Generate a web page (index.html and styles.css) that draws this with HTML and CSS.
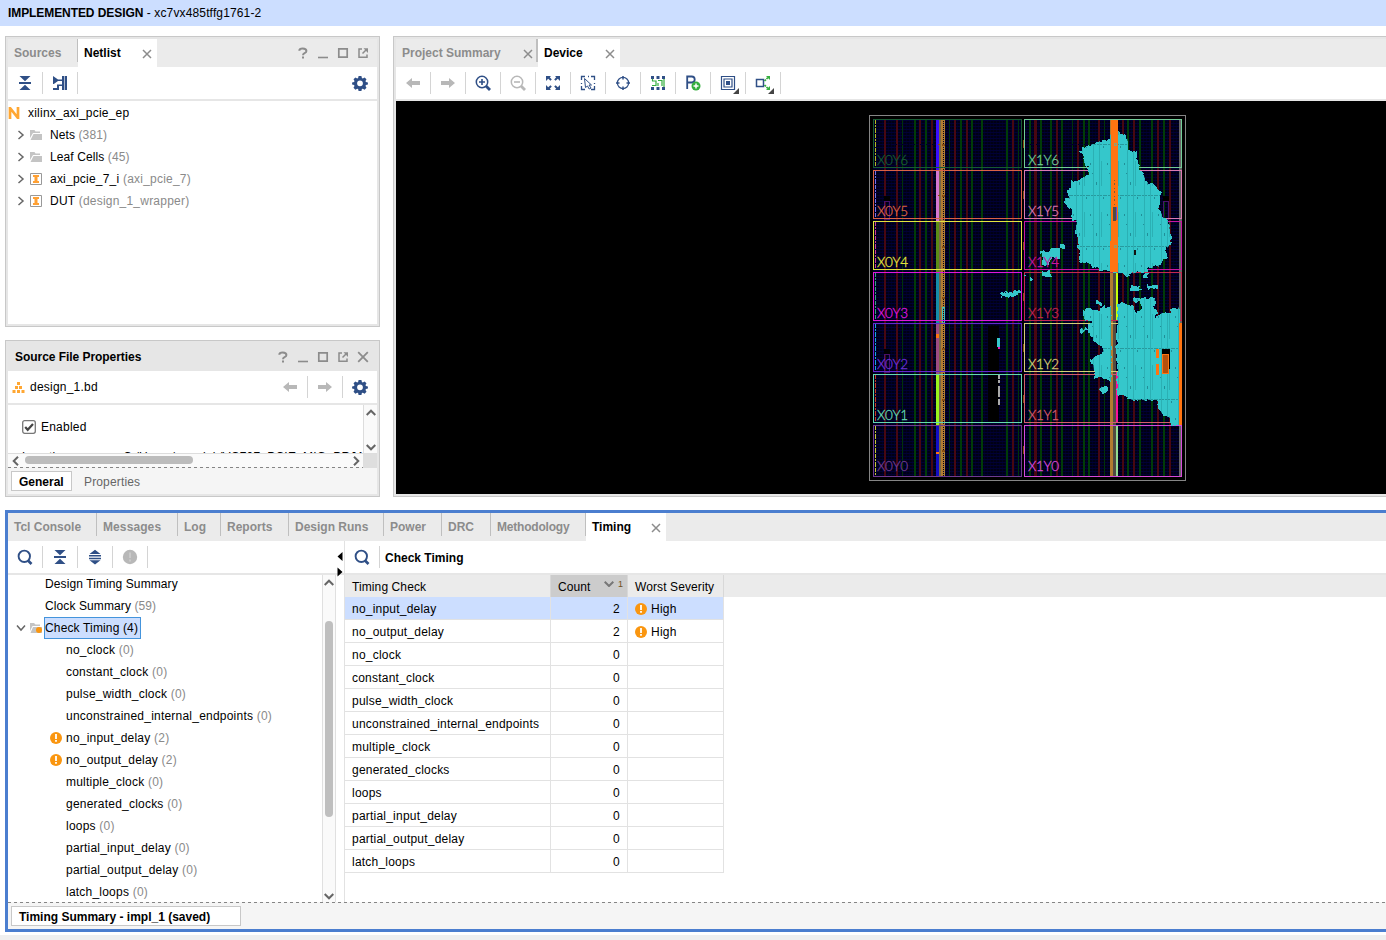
FILE: index.html
```html
<!DOCTYPE html>
<html lang="en">
<head>
<meta charset="utf-8">
<title>Implemented Design</title>
<link rel="stylesheet" href="styles.css">
</head>
<body>
<svg class="defs" width="0" height="0" aria-hidden="true">
  <defs>
    <symbol id="close" viewBox="0 0 10 10"><path d="M1 1l8 8M9 1L1 9" stroke="#8c8c8c" stroke-width="1.5" fill="none"/></symbol>
    <symbol id="help" viewBox="0 0 12 12"><path d="M2.3 3.8Q2.4 1.5 5.7 1.5Q9.4 1.5 9.4 4Q9.4 5.4 7.6 6.2Q6 6.9 6 8.3M6 9.6V11.6" stroke="#8c8c8c" stroke-width="2" fill="none"/></symbol>
    <symbol id="min" viewBox="0 0 12 12"><path d="M1 10.5h10" stroke="#8c8c8c" stroke-width="1.6"/></symbol>
    <symbol id="max" viewBox="0 0 12 12"><path d="M1.8 1.800h8.400v8.400H1.800z" stroke="#8c8c8c" stroke-width="1.700" fill="none"/></symbol>
    <symbol id="pop" viewBox="0 0 12 12"><path d="M5 2H2v8.300h8V7.500M5.500 6.500L9 3" stroke="#8c8c8c" stroke-width="1.500" fill="none"/><path d="M6.500 1.300H11V6z" fill="#8c8c8c"/></symbol>
    <symbol id="gear" viewBox="0 0 16 16"><path fill="#2f4f86" fill-rule="evenodd" d="M6.600 1h2.800l.5 2 .9.4 1.800-1 1.900 1.900-1 1.800.4.9 2 .5v2.100l-2 .5-.4.9 1 1.800-1.900 1.900-1.800-1-.9.4-.5 2H6.600l-.5-2-.9-.4-1.800 1-1.900-1.900 1-1.800-.4-.9-2-.5V7.500l2-.5.4-.9-1-1.800 1.900-1.900 1.800 1 .9-.4zM8 5.400a2.900 2.900 0 1 0 0 5.800 2.900 2.900 0 0 0 0-5.800z"/></symbol>
    <symbol id="collapse" viewBox="0 0 16 16"><path fill="#2f4f86" d="M2.500 1h11L8 6.200zM2 7h12v2H2zM2.500 15h11L8 9.800z"/></symbol>
    <symbol id="expand" viewBox="0 0 16 16"><path fill="#2f4f86" d="M8 .8L13.500 5h-11zM2 6h12v1.500H2zM2 8.800h12v1.500H2zM2.500 11.200h11L8 15.400z"/></symbol>
    <symbol id="search" viewBox="0 0 16 16"><circle cx="7.300" cy="7.300" r="5.700" fill="none" stroke="#2f4f86" stroke-width="1.900"/><path d="M11 11.500l3.500 3.500" stroke="#2f4f86" stroke-width="2.600"/></symbol>
    <symbol id="left" viewBox="0 0 16 16"><path fill="#b8b8b8" d="M1 8l6-5v3h8v4H7v3z"/></symbol>
    <symbol id="right" viewBox="0 0 16 16"><path fill="#b8b8b8" d="M15 8L9 3v3H1v4h8v3z"/></symbol>
    <symbol id="chev" viewBox="0 0 8 10"><path d="M1.500 1l4.500 4-4.500 4" stroke="#666" stroke-width="1.500" fill="none"/></symbol>
    <symbol id="arrow" viewBox="0 0 10 8"><path d="M.7 6L5 1.700 9.300 6" stroke="#666" stroke-width="2" fill="none"/></symbol>
    <symbol id="folder" viewBox="0 0 12 10"><path fill="#c4c4c4" d="M0 0h4.500l1 1.500H10V3H3L0 8zM3.500 4H12v6H.5z"/></symbol>
    <symbol id="cell" viewBox="0 0 12 12"><path fill="#fff" stroke="#999" d="M.5.500h11v11H.5z"/><path fill="#ffa033" d="M3 2h6v2H7.500v4H9v2H3V8h1.500V4H3z"/></symbol>
    <symbol id="warn" viewBox="0 0 12 12"><circle cx="6" cy="6" r="6" fill="#fa9610"/><path fill="#fff" d="M5.100 2h1.800v5H5.100zM5.100 8h1.800v1.700H5.100z"/></symbol>
    <symbol id="glass" viewBox="0 0 16 16"><circle cx="7" cy="7" r="5.700" fill="none" stroke="currentColor" stroke-width="1.500"/><path d="M11 11l4 4" stroke="currentColor" stroke-width="2.800"/></symbol>
  </defs>
</svg>

<header class="title"><b>IMPLEMENTED DESIGN</b>&nbsp;- xc7vx485tffg1761-2</header>

<main class="upper">
  <div class="side">
    <section class="panel netlist">
      <div class="tabs">
        <div class="tab src">Sources</div>
        <div class="tab active net">Netlist<svg class="x"><use href="#close"/></svg></div>
        <div class="winbtns"><svg><use href="#help"/></svg><svg><use href="#min"/></svg><svg><use href="#max"/></svg><svg><use href="#pop"/></svg></div>
      </div>
      <div class="tools">
        <span class="tool"><svg><use href="#collapse"/></svg></span>
        <span class="tool"><svg viewBox="0 0 16 16"><path fill="#2f4f86" d="M1 1l5 3.500h4V1h5v14h-5v-4H7v4H1v-2h4v-3.500h5V6H6L1.800 9H1z"/><path d="M12.500 1v14" stroke="#fff" stroke-width=".6"/></svg></span>
        <span class="gear"><svg><use href="#gear"/></svg></span>
      </div>
      <div class="tree">
        <div class="root"><svg viewBox="0 0 12 12"><path d="M2 12V1l8 10V0" fill="none" stroke="#ffa733" stroke-width="2.700"/></svg><span>xilinx_axi_pcie_ep</span></div>
        <div class="node"><svg class="chev"><use href="#chev"/></svg><svg class="ico f"><use href="#folder"/></svg><span class="cap">Nets <i>(381)</i></span></div>
        <div class="node"><svg class="chev"><use href="#chev"/></svg><svg class="ico f"><use href="#folder"/></svg><span class="cap">Leaf Cells <i>(45)</i></span></div>
        <div class="node"><svg class="chev"><use href="#chev"/></svg><svg class="ico"><use href="#cell"/></svg><span>axi_pcie_7_i <i>(axi_pcie_7)</i></span></div>
        <div class="node"><svg class="chev"><use href="#chev"/></svg><svg class="ico"><use href="#cell"/></svg><span>DUT <i>(design_1_wrapper)</i></span></div>
      </div>
    </section>

    <section class="panel props">
      <div class="phead"><b>Source File Properties</b>
        <div class="winbtns"><svg><use href="#help"/></svg><svg><use href="#min"/></svg><svg><use href="#max"/></svg><svg><use href="#pop"/></svg><svg><use href="#close"/></svg></div>
      </div>
      <div class="tools">
        <svg class="bd" viewBox="0 0 12 11"><path fill="#ffa733" d="M4.500 0h3v3h-3zM2.500 4h3v3h-3zM6.500 4h3v3h-3zM0 8h3v3H0zM4.500 8h3v3h-3zM9 8h3v3H9z"/></svg>
        <span>design_1.bd</span>
        <span class="tool nav"><svg><use href="#left"/></svg></span>
        <span class="tool"><svg><use href="#right"/></svg></span>
        <span class="gear"><svg><use href="#gear"/></svg></span>
      </div>
      <div class="pbody">
        <div class="form">
          <div class="check"><svg viewBox="0 0 14 14"><rect x=".7" y=".7" width="12.600" height="12.600" rx="2" fill="#fff" stroke="#777" stroke-width="1.300"/><path d="M3.200 7l2.500 2.800L11 4" fill="none" stroke="#444" stroke-width="2.200"/></svg>Enabled</div>
          <div class="loc"><span>Location:</span><span>C:/Users/mend_k/VC707_PCIE_MIG_PRJAMA/</span></div>
        </div>
        <div class="vbar"><svg><use href="#arrow"/></svg><svg class="down"><use href="#arrow"/></svg></div>
      </div>
      <div class="hbar"><svg class="l"><use href="#arrow"/></svg><div class="hthumb"></div><svg class="r"><use href="#arrow"/></svg><div class="corner"></div></div>
      <div class="foot"><b class="ftab">General</b><span class="ftxt">Properties</span></div>
    </section>
  </div>

  <section class="panel device">
    <div class="tabs">
      <div class="tab ps">Project Summary<svg class="x"><use href="#close"/></svg></div>
      <div class="tab active dev">Device<svg class="x"><use href="#close"/></svg></div>
    </div>
    <div class="tools">
      <span class="tool"><svg><use href="#left"/></svg></span>
      <span class="tool"><svg><use href="#right"/></svg></span>
      <span class="tool blue"><svg><use href="#glass"/></svg><svg class="over" viewBox="0 0 16 16"><path d="M4 7h6M7 4v6" stroke="#2f4f86" stroke-width="1.600"/></svg></span>
      <span class="tool gray"><svg><use href="#glass"/></svg><svg class="over" viewBox="0 0 16 16"><path d="M4 7h6" stroke="#b8b8b8" stroke-width="1.600"/></svg></span>
      <span class="tool"><svg viewBox="0 0 16 16"><path fill="#2f4f86" d="M1 1h5L4.800 2.200l2 2.200-1.400 1.400-2.200-2L1 6zM15 1h-5l1.200 1.200-2 2.200 1.400 1.400 2.200-2L15 6zM1 15h5l-1.200-1.200 2-2.200-1.400-1.400-2.200 2L1 10zM15 15h-5l1.200-1.200-2-2.200 1.400-1.400 2.200 2L15 10z"/></svg></span>
      <span class="tool"><svg viewBox="0 0 16 16"><path d="M1.500 5V1.500H5M11 1.500h3.500V5M14.500 11v3.500H11M5 14.500H1.500V11M8 1.500h1M1.500 8v1M14.500 8v1" stroke="#2f4f86" stroke-width="1.300" fill="none"/><path d="M4.500 3.500l7 6.500H9l2 3-1.800 1L7.500 11l-2 1.500z" fill="#fff" stroke="#2f4f86"/></svg></span>
      <span class="tool"><svg viewBox="0 0 16 16"><circle cx="8" cy="8" r="5.600" fill="none" stroke="#2f4f86" stroke-width="1.200"/><path d="M8 1v3.500M8 11.500V15M1 8h3.500M11.500 8H15" stroke="#2f4f86" stroke-width="1.500"/></svg></span>
      <span class="tool"><svg viewBox="0 0 16 16"><path d="M1 2.500h14M1 13.500h14" stroke="#2f4f86" stroke-width="3" stroke-dasharray="3 2.500"/><path d="M2 10.500h4V6H2M8 5.500h4v5.500M8 8v3M14 4v8M2.500 4v2" stroke="#35ae3f" stroke-width="1.200" fill="none"/></svg></span>
      <span class="tool"><svg viewBox="0 0 16 16"><path d="M2.200 14V1.500h4.500q3 0 3 3t-3 3H2.500" fill="none" stroke="#2f4f86" stroke-width="1.800"/><circle cx="11" cy="11" r="4.500" fill="#35ae3f"/><path d="M8.500 11h5M11 8.500v5" stroke="#fff" stroke-width="1.500"/></svg></span>
      <span class="tool menu"><svg viewBox="0 0 16 16"><path d="M1.500 1.500h13v13h-13zM4 4h8v8H4z" fill="none" stroke="#2f4f86" stroke-width="1.200"/><path fill="#2f4f86" d="M6 6h4v4H6z"/></svg></span>
      <span class="tool menu"><svg viewBox="0 0 16 16"><path d="M1.500 4.500h7v7h-7z" fill="none" stroke="#2f4f86" stroke-width="1.500"/><path d="M9.500 6l4-4M9.500 10l4 4" stroke="#35ae3f" stroke-width="1.700" stroke-dasharray="2 .8"/><path fill="#35ae3f" d="M11 1h4v4zM11 15h4v-4z"/></svg></span>
    </div>
    <svg class="chip" viewBox="396 101 990 393" shape-rendering="crispEdges">
      <defs>
        <pattern id="grid" width="3" height="3" patternUnits="userSpaceOnUse"><path fill="#000014" d="M0 0h3v3H0z"/><path fill="#000035" d="M0 0h3v1H0z"/><path fill="#000024" d="M0 1h1v2H0z"/></pattern>
        <pattern id="shade" width="17" height="51" patternUnits="userSpaceOnUse"><path d="M5.500 0v51M11.500 0v51M13.500 8v25" stroke="#2bb0b4" stroke-width="1"/><path d="M0 42.500h17" stroke="#279a9e" stroke-dasharray="2 1"/><path fill="#218f98" d="M2 10h1v2H2zM8 29h1v3H8zM15 44h1v2h-1zM4 20h1v1H4z"/></pattern>
        <filter id="rough" x="-5%" y="-5%" width="110%" height="110%"><feTurbulence type="fractalNoise" baseFrequency=".2" numOctaves="2" seed="4"/><feDisplacementMap in="SourceGraphic" scale="6" xChannelSelector="R" yChannelSelector="G"/></filter>
        <path id="blobA" d="M180 122L195 115 205 105 225 102 230 95 245 92 270 86 270 75 290 60 300 68 320 75 323 95 322 120 350 125 352 150 358 155 357 180 370 192 378 215 400 222 415 240 420 250 418 300 430 320 448 335 450 405 440 415 438 440 425 455 420 470 385 475 380 485 350 488 330 492 318 498 305 490 270 487 240 480 225 470 205 460 175 455 180 430 175 410 175 372 165 370 172 332 158 328 155 300 140 290 135 270 148 265 140 240 155 230 158 215 180 212 195 200 208 195 200 170 192 155 190 128Z"/>
        <path id="blobB" d="M190 75L195 55 205 52 220 60 240 68 240 52 255 45 256 58 273 52 273 272 255 268 245 258 225 265 220 225 210 212 225 200 250 190 245 170 225 155 210 135 205 122 180 125 182 115 205 118 200 105 222 95 195 90ZM291 45L310 35 322 45 340 50 348 75 362 60 362 38 335 32 345 24 405 25 410 38 403 50 410 82 425 70 448 70 452 55 475 52 480 60 480 100 480 405 465 408 450 402 452 385 430 375 415 355 410 330 340 332 320 320 291 315ZM240 290L262 290 268 305 250 312 238 300Z"/>
        <clipPath id="inA"><use href="#blobA" transform="translate(1020 110) scale(.3333)"/></clipPath>
        <clipPath id="inB"><use href="#blobB" transform="translate(1020 290) scale(.3333)"/></clipPath>
      </defs>
      <path fill="#000" d="M396 101h990v393H396z"/>
      <path d="M869.500 115.500h316v365h-316z" fill="none" stroke="#858585"/>
      <path fill="url(#grid)" d="M873 119h149v358H873zM1024 119h158v358h-158z"/>
      <path stroke="#003c08" stroke-width="2" d="M915 119v358M926 119v358M961 119v358M972 119v358M982 119v358M1007 119v358M1030 119v358M1041 119v358M1051 119v358M1062 119v358M1084 119v358M1089 119v358M1128 119v358M1140 119v358M1152 119v358M1164 119v358"/>
      <path stroke="#00330a" d="M902.500 119v358M949.500 119v358M1018.500 119v358M1072.500 119v358M1104.500 119v358"/>
      <path stroke="#480711" stroke-width="2" d="M885 119v358M897 119v358M920 119v358M932 119v358M955 119v358M967 119v358M1013 119v358M1057 119v358M1078 119v358M1099 119v358M1123 119v358M1134 119v358M1158 119v358M1170 119v358"/>
      <path fill="#480711" d="M1034 119h3v358h-3z"/>
      <path fill="#000" d="M988 326h11v95h-11zM884 196h6v5h-6zM884 349h6v5h-6zM1163 196h6v5h-6z"/>
      <path stroke="#48116b" fill="none" d="M884.500 201.500h5v18h-5zM884.500 354.500h5v18h-5zM1163.500 201.500h5v18h-5z"/>
      <path stroke="#00001c" stroke-dasharray="1 5" d="M890 144.500h95M1030 144.500h125"/>
      <g fill="none" stroke-dasharray="4 1 2 1 5 1"><path stroke="#b3bd22" d="M875.500 120v48"/><path stroke="#7671e8" d="M875.500 171v48"/><path stroke="#d13d91" d="M875.500 222v48"/><path stroke="#35a184" d="M875.500 273v48"/><path stroke="#16a1e6" d="M875.500 324v48"/><path stroke="#c93d1f" d="M875.500 375v48"/><path stroke="#cbc635" d="M875.500 426v50"/></g>
      <path fill="#786747" d="M939 120h2v357h-2z"/><path fill="#b27d30" d="M941 120h2v357h-2zM944 120h1v357h-1z"/><path stroke="#b27d30" stroke-dasharray="1 1" d="M943.500 120v357"/>
      <path fill="#3b0dff" d="M936 120h3v50h-3z"/><path fill="#d777d1" d="M936 170h3v52h-3z"/><path fill="#5c8c16" d="M936 222h3v50h-3z"/><path fill="#168da7" d="M936 272h3v51h-3z"/><path fill="#9d4c82" d="M936 323h3v51h-3z"/><path fill="#9cf51d" d="M936 374h3v51h-3z"/><path fill="#120dc4" d="M936 425h3v52h-3z"/>
      <path fill="#864e14" d="M938 144h2v1h-2zM942 144h3v2h-3zM938 195h2v1h-2zM942 195h3v2h-3zM942 246h3v2h-3zM942 297h3v2h-3zM942 348h3v2h-3zM942 399h3v2h-3zM942 450h3v2h-3zM1023 140h1v8h-1zM1023 191h1v8h-1zM1023 242h1v8h-1zM1023 293h1v8h-1zM1023 344h1v8h-1zM1023 395h1v8h-1zM1023 446h1v8h-1z"/>
      <path fill="#ff7411" d="M936 334h3v4h-3zM936 452h3v2h-3z"/>
      <path stroke="#3bc2bb" fill="none" d="M942.500 324v-17h2v17"/>
      <path fill="#b27d30" d="M1110 120h3v357h-3z"/><path fill="#514c42" d="M1113 120h3v357h-3z"/><path fill="#c6ff08" d="M1116 272h2v49h-2z"/><path fill="#fa119b" d="M1116 372h2v50h-2z"/><path fill="#91dc91" d="M1116 425h2v51h-2z"/><path fill="#686868" d="M1179 120h3v357h-3z"/>
      <g fill="none" stroke-width="1">
        <path stroke="#175b32" d="M873.500 119.500h148v48h-148z"/><path stroke="#db6246" d="M873.500 170.500h148v48h-148z"/><path stroke="#e3e33f" d="M873.500 221.500h148v48h-148z"/><path stroke="#df16db" d="M873.500 272.500h148v48h-148z"/><path stroke="#6527ce" d="M873.500 323.500h148v48h-148z"/><path stroke="#65d8b1" d="M873.500 374.500h148v48h-148z"/><path stroke="#703c91" d="M873.500 425.500h148v51h-148z"/>
        <path stroke="#73cc97" d="M1024.500 119.500h157v48h-157z"/><path stroke="#dc7ab2" d="M1024.500 170.500h157v48h-157z"/><path stroke="#c915a1" d="M1024.500 221.500h157v48h-157z"/><path stroke="#c42750" d="M1024.500 272.500h157v48h-157z"/><path stroke="#d6cd78" d="M1024.500 323.500h157v48h-157z"/><path stroke="#d55d6c" d="M1024.500 374.500h157v48h-157z"/><path stroke="#d74adb" d="M1024.500 425.500h157v51h-157z"/>
      </g>
      <g filter="url(#rough)" fill="#36c7cb">
        <use href="#blobA" transform="translate(1020 110) scale(.3333)"/>
        <use href="#blobB" transform="translate(1020 290) scale(.3333)"/>
        <path d="M1041 251h9l2-3h8v10h-7l-4 3v4h-7zM1041 271h10v6h-10zM1060 245h6v3h-6zM1131 286h9l1 5h-11zM1147 285h10v4h-10zM1144 273h4v5h-4zM1001 293h6v-2h4v2h3v-3h5v7h-18zM1158 191h3v6h-3zM1024 275h3v2h-3zM1030 278h3v3h-3zM1096 301h5v4h-5z"/>
      </g>
      <path fill="url(#shade)" clip-path="url(#inA)" d="M1060 119h112v160h-112z"/>
      <path fill="url(#shade)" clip-path="url(#inB)" d="M1075 290h107v140h-107z"/>
      <path fill="#ff7411" d="M1111 120h7v152h-8v-31h1zM1179 323h3v102h-3zM1156 349h3v9h-3zM1156 364h3v11h-3z"/>
      <path stroke="#845b30" stroke-dasharray="1 2 2 3" d="M1114.500 180v40"/><path fill="#514c42" d="M1113 207h3v14h-3z"/><path fill="#6547d2" d="M1116 207h1v13h-1z"/><path fill="none" stroke="#93a06d" d="M1114.500 143.500h2v2h-2zM1114.500 245.500h2v2h-2z"/>
      <path fill="#000" d="M1162 349h8v20h-8z"/><path fill="#b5500c" stroke="#ff7411" d="M1162.500 354.500h6v19h-6z"/>
      <path fill="#111" d="M1134 250h2v5h-2z"/>
      <path fill="#36c7cb" d="M997 338h3v9h-3z"/><path fill="#f318b2" d="M998 347h2v2h-2z"/><path fill="#aaa" d="M998 375h2v4h-2zM998 380h2v3h-2zM998 386h2v11h-2zM998 399h2v6h-2z"/>
      <g class="regions">
        <text x="877" y="165" textLength="31" color="#175b32">X0Y6</text><text x="877" y="216" textLength="31" color="#db6246">X0Y5</text><text x="877" y="267" textLength="31" color="#e3e33f">X0Y4</text><text x="877" y="318" textLength="31" color="#df16db">X0Y3</text><text x="877" y="369" textLength="31" color="#6d30d8">X0Y2</text><text x="877" y="420" textLength="31" color="#65d8b1">X0Y1</text><text x="877" y="471" textLength="31" color="#703c91">X0Y0</text>
        <text x="1028" y="165" textLength="31" color="#73cc97">X1Y6</text><text x="1028" y="216" textLength="31" color="#dc7ab2">X1Y5</text><text x="1028" y="267" textLength="31" color="#c915a1">X1Y4</text><text x="1028" y="318" textLength="31" color="#c42750">X1Y3</text><text x="1028" y="369" textLength="31" color="#d6cd78">X1Y2</text><text x="1028" y="420" textLength="31" color="#d55d6c">X1Y1</text><text x="1028" y="471" textLength="31" color="#d74adb">X1Y0</text>
      </g>
    </svg>
  </section>
</main>

<section class="timing">
  <div class="tabs low">
    <div class="tab t1">Tcl Console</div><div class="tab t2">Messages</div><div class="tab t3">Log</div><div class="tab t4">Reports</div><div class="tab t5">Design Runs</div><div class="tab t6">Power</div><div class="tab t7">DRC</div><div class="tab t8">Methodology</div>
    <div class="tab active t9">Timing<svg class="x"><use href="#close"/></svg></div>
  </div>
  <div class="split">
    <div class="pane">
      <div class="tools">
        <span class="tool"><svg><use href="#search"/></svg></span>
        <span class="tool"><svg><use href="#collapse"/></svg></span>
        <span class="tool"><svg><use href="#expand"/></svg></span>
        <span class="tool"><svg viewBox="0 0 16 16"><circle cx="8" cy="8" r="7.200" fill="#b8b8b8"/><path d="M8 3.500v5.500M8 10.500v2" stroke="#ccc" stroke-width="1.800"/></svg></span>
        <svg class="grip" viewBox="0 0 6 25"><path d="M5.500 0v9L.5 4.500zM.5 15.500v9l5-4.500z"/></svg>
      </div>
      <div class="list">
        <div class="items">
          <div class="it top cap">Design Timing Summary</div>
          <div class="it top cap">Clock Summary <i>(59)</i></div>
          <div class="it sel"><svg class="chev open"><use href="#chev"/></svg><svg class="fold" viewBox="0 0 14 12"><path fill="#c4c4c4" d="M1 1h4l1.500 1.500H11V4H3.500L1 9zM4 5h9v6H1.500z"/><circle cx="10" cy="8" r="3" fill="#fa9610"/></svg><span>Check Timing (4)</span></div>
          <div class="it">no_clock <i>(0)</i></div>
          <div class="it">constant_clock <i>(0)</i></div>
          <div class="it">pulse_width_clock <i>(0)</i></div>
          <div class="it">unconstrained_internal_endpoints <i>(0)</i></div>
          <div class="it w"><svg class="wi"><use href="#warn"/></svg>no_input_delay <i>(2)</i></div>
          <div class="it w"><svg class="wi"><use href="#warn"/></svg>no_output_delay <i>(2)</i></div>
          <div class="it">multiple_clock <i>(0)</i></div>
          <div class="it">generated_clocks <i>(0)</i></div>
          <div class="it">loops <i>(0)</i></div>
          <div class="it">partial_input_delay <i>(0)</i></div>
          <div class="it">partial_output_delay <i>(0)</i></div>
          <div class="it">latch_loops <i>(0)</i></div>
        </div>
        <div class="scroll"><svg><use href="#arrow"/></svg><div class="thumb"></div><svg class="down"><use href="#arrow"/></svg></div>
      </div>
    </div>
    <div class="report">
      <div class="tools"><span class="tool"><svg><use href="#search"/></svg></span><b class="rt">Check Timing</b></div>
      <div class="row head"><div>Timing Check</div><div class="cnt">Count<span class="sort"><svg viewBox="0 0 10 6"><path d="M.7.700L5 5 9.300.7" fill="none" stroke="#777" stroke-width="2"/></svg><small>1</small></span></div><div>Worst Severity</div></div>
      <div class="row hot"><div>no_input_delay</div><div>2</div><div><svg class="wi"><use href="#warn"/></svg>High</div></div>
      <div class="row"><div>no_output_delay</div><div>2</div><div><svg class="wi"><use href="#warn"/></svg>High</div></div>
      <div class="row"><div>no_clock</div><div>0</div><div></div></div>
      <div class="row"><div>constant_clock</div><div>0</div><div></div></div>
      <div class="row"><div>pulse_width_clock</div><div>0</div><div></div></div>
      <div class="row"><div>unconstrained_internal_endpoints</div><div>0</div><div></div></div>
      <div class="row"><div>multiple_clock</div><div>0</div><div></div></div>
      <div class="row"><div>generated_clocks</div><div>0</div><div></div></div>
      <div class="row"><div>loops</div><div>0</div><div></div></div>
      <div class="row"><div>partial_input_delay</div><div>0</div><div></div></div>
      <div class="row"><div>partial_output_delay</div><div>0</div><div></div></div>
      <div class="row"><div>latch_loops</div><div>0</div><div></div></div>
    </div>
  </div>
  <div class="foot"><b class="ftab wide">Timing Summary - impl_1 (saved)</b></div>
</section>
<div class="status"></div>
</body>
</html>
```
FILE: styles.css
```css
* { box-sizing: border-box; }
body { margin: 0; width: 1386px; height: 940px; overflow: hidden; display: flex; flex-direction: column; background: #fff; color: #000; font: 12px/22px "Liberation Sans", Arial, sans-serif; letter-spacing: .22px; }
svg { display: block; flex: none; }
b { letter-spacing: 0; }
i { font-style: normal; color: #8a8a8a; }
.defs { position: absolute; }
.cap { letter-spacing: .1px; }
.title { height: 26px; line-height: 26px; padding-left: 8px; background: #ccdeff; white-space: pre; flex: none; letter-spacing: .14px; }
.title b { letter-spacing: -.08px; }
.upper { display: flex; gap: 13px; height: 471px; margin-top: 10px; padding: 0 0 10px 5px; flex: none; }
.side { width: 375px; display: flex; flex-direction: column; gap: 13px; }
.panel { border: 1px solid #c8c8c8; box-shadow: inset 0 0 0 2px #e6e6e6; padding: 2px; overflow: hidden; }
.netlist { height: 291px; }
.props { height: 157px; }
.device { flex: 1; border-right: 0; padding-right: 0; display: flex; flex-direction: column; box-shadow: inset 2px 2px #e6e6e6, inset 0 -2px #e6e6e6; }
.tabs { height: 28px; display: flex; background: #ebebeb; flex: none; }
.tab { position: relative; height: 23px; line-height: 28px; padding-left: 6px; font-weight: bold; letter-spacing: 0; color: #8c8c8c; border-right: 1px solid #bfbfbf; white-space: nowrap; flex: none; }
.tab.active { height: 28px; background: #fff; color: #000; border: 0; }
.tab .x { position: absolute; right: 5px; top: 10px; width: 10px; height: 10px; }
.src { width: 70px; }
.net { width: 79px; }
.ps { width: 142px; border-right-width: 2px; }
.ps .x { right: 3px; }
.dev { width: 82px; }
.t1 { width: 89px; } .t2 { width: 81px; letter-spacing: .1px; } .t3 { width: 43px; } .t4 { width: 68px; } .t5 { width: 95px; }
.t6 { width: 58px; } .t7 { width: 49px; } .t8 { width: 95px; letter-spacing: -.2px; } .t9 { width: 80px; }
.winbtns { margin-left: auto; display: flex; gap: 8px; align-items: center; padding-right: 8px; }
.winbtns svg { width: 12px; height: 12px; }
.tools { height: 34px; display: flex; align-items: center; border-bottom: 2px solid #e6e6e6; flex: none; }
.tool { position: relative; width: 35px; height: 22px; border-right: 1px solid #d4d4d4; display: flex; align-items: center; justify-content: center; flex: none; }
.tool svg, .gear svg { width: 16px; height: 16px; }
.tool .over { position: absolute; left: 9px; top: 3px; }
.blue { color: #2f4f86; }
.gray { color: #b8b8b8; }
.menu::after { content: ""; position: absolute; right: 6px; bottom: 0; border: 3px solid #444; border-left-color: transparent; border-top-color: transparent; }
.gear { margin-left: auto; padding-right: 9px; }
.tree { padding-top: 1px; }
.root, .node { display: flex; align-items: center; height: 22px; }
.root svg { width: 12px; height: 12px; margin-right: 8px; }
.node { padding-left: 9px; }
.chev { width: 8px; height: 10px; }
.ico { width: 12px; height: 12px; margin: 0 8px 1px 5px; }
.ico.f { height: 10px; }
.phead { height: 28px; line-height: 28px; padding-left: 7px; background: #e6e6e6; display: flex; }
.phead b { letter-spacing: -.05px; }
.bd { width: 13px; height: 11px; margin: 0 5px 0 4px; }
.nav { margin-left: auto; }
.props .gear { margin-left: 0; width: 34px; padding-left: 9px; flex: none; }
.pbody { height: 48px; display: flex; }
.form { flex: 1; overflow: hidden; padding: 11px 0 0 14px; white-space: nowrap; }
.check { display: flex; align-items: center; gap: 5px; height: 22px; }
.check svg { width: 14px; height: 14px; }
.loc { display: flex; margin-top: 8px; }
.loc span:first-child { width: 101px; flex: none; }
.vbar { width: 14px; border-left: 1px solid #ddd; background: #fafafa; display: flex; flex-direction: column; justify-content: space-between; padding: 4px 0 2px 2px; }
.vbar svg, .scroll svg, .hbar svg { width: 10px; height: 8px; }
.down { transform: rotate(180deg); }
.hbar { height: 14px; display: flex; align-items: center; background: #fafafa; border-top: 1px solid #ddd; padding-left: 3px; }
.l { transform: rotate(-90deg); }
.r { transform: rotate(90deg); margin-left: auto; margin-right: 2px; }
.hthumb { width: 168px; height: 8px; margin: 0 0 1px 4px; border-radius: 4px; background: #bcbcbc; }
.corner { width: 14px; height: 14px; background: #dedede; }
.foot { height: 27px; display: flex; background: repeating-linear-gradient(90deg, #858585 0 3px, transparent 3px 6px) 0 0 / 100% 1px no-repeat #f5f5f5; padding: 4px 3px 3px; line-height: 20px; flex: none; }
.ftab { width: 61px; height: 20px; padding-left: 7px; border: 1px solid #c8c8c8; background: #fff; }
.ftab.wide { width: 230px; }
.ftxt { margin-left: 12px; line-height: 22px; color: #666; letter-spacing: .15px; }
.chip { width: 990px; height: 393px; }
.regions { font: 300 13.500px Lato, "Liberation Sans", sans-serif; letter-spacing: 0; stroke-width: .3px; }
.regions text { fill: currentColor; stroke: currentColor; }
.timing { height: 422px; margin: 3px 0 0 5px; border: 3px solid #4b7ecf; border-right: 0; display: flex; flex-direction: column; flex: none; }
.split { flex: 1; display: flex; min-height: 0; }
.pane { width: 337px; border-right: 1px solid #e2e2e2; display: flex; flex-direction: column; }
.pane > .tools { position: relative; }
.grip { position: absolute; right: 1px; top: 11px; width: 6px; height: 25px; }
.list { flex: 1; min-height: 0; display: flex; overflow: hidden; }
.items { flex: 1; overflow: hidden; margin-top: -2px; }
.it { height: 22px; display: flex; align-items: center; padding-left: 58px; white-space: pre; }
.it.top { padding-left: 37px; }
.it.sel { padding-left: 8px; }
.it.w { padding-left: 42px; }
.open { transform: rotate(90deg); margin: 0 4px 0 1px; }
.fold { width: 14px; height: 12px; margin-right: 2px; }
.sel span { height: 22px; line-height: 20px; border: 1px solid #4494dc; background: #ccdeff; padding: 0 2px 0 0; margin-left: -1px; letter-spacing: .15px; }
.wi { width: 12px; height: 12px; margin-right: 4px; }
.scroll { width: 14px; margin-right: 8px; border: 1px solid #e0e0e0; border-width: 0 1px; background: #fafafa; display: flex; flex-direction: column; align-items: center; padding: 4px 0 2px; }
.thumb { width: 8px; height: 196px; margin-top: 34px; border-radius: 4px; background: #bfbfbf; }
.scroll .down { margin-top: auto; }
.report { flex: 1; }
.rt { margin-left: 5px; padding-top: 1px; }
.row { display: grid; grid-template-columns: 206px 77px 96px; grid-template-rows: 100%; height: 23px; line-height: 20px; }
.row > div { border: 1px solid #e2e2e2; border-width: 0 1px 1px 0; padding: 2px 0 0 7px; display: flex; align-items: center; }
.row > div:nth-child(2) { justify-content: flex-end; padding-right: 7px; }
.row .wi { margin-bottom: 1px; }
.row.head { height: 22px; background: #ebebeb; letter-spacing: .1px; }
.row.head > div { border-bottom: 0; border-color: #d8d8d8; }
.row.head .cnt { background: #ccc; justify-content: space-between; padding-right: 4px; }
.hot { background: linear-gradient(90deg, #ccdeff 379px, transparent 379px); }
.sort { display: flex; gap: 4px; height: 18px; align-items: center; padding-bottom: 6px; }
.sort svg { width: 10px; height: 6px; }
.sort small { font-size: 9px; line-height: 10px; color: #705020; }
.status { height: 5px; margin-top: auto; background: #efefef; }
```
